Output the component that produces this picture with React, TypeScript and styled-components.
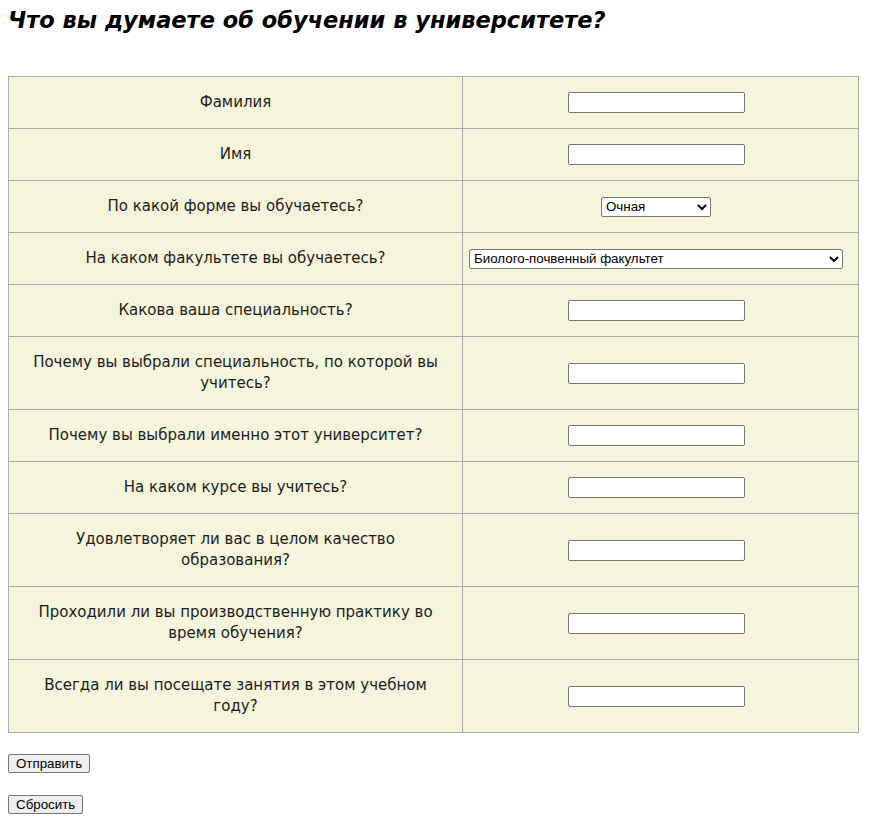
import * as React from 'react'
import styled, { createGlobalStyle } from 'styled-components'

const GlobalStyle = createGlobalStyle`
  body {
    margin: 8px;
    background: #ffffff;
    color: #1c1c1c;
    font-family: "DejaVu Sans", "Liberation Sans", sans-serif;
  }
`

type Question = {
  label: string
  field: 'text' | 'form' | 'faculty'
}

const questions: Question[] = [
  { label: 'Фамилия', field: 'text' },
  { label: 'Имя', field: 'text' },
  { label: 'По какой форме вы обучаетесь?', field: 'form' },
  { label: 'На каком факультете вы обучаетесь?', field: 'faculty' },
  { label: 'Какова ваша специальность?', field: 'text' },
  { label: 'Почему вы выбрали специальность, по которой вы учитесь?', field: 'text' },
  { label: 'Почему вы выбрали именно этот университет?', field: 'text' },
  { label: 'На каком курсе вы учитесь?', field: 'text' },
  { label: 'Удовлетворяет ли вас в целом качество образования?', field: 'text' },
  { label: 'Проходили ли вы производственную практику во время обучения?', field: 'text' },
  { label: 'Всегда ли вы посещате занятия в этом учебном году?', field: 'text' },
]

const App: React.FC<{}> = () => {
  return (
    <>
      <GlobalStyle />
      <Title>Что вы думаете об обучении в университете?</Title>
      <Survey>
        <colgroup>
          <Col width="454px" />
          <Col width="396px" />
        </colgroup>
        <tbody>
          {questions.map((q) => (
            <tr key={q.label}>
              <LabelCell>{q.label}</LabelCell>
              <FieldCell>
                {q.field === 'text' && <TextInput type="text" />}
                {q.field === 'form' && (
                  <Select width="110px" defaultValue="Очная">
                    <option>Очная</option>
                    <option>Заочная</option>
                    <option>Очно-заочная</option>
                  </Select>
                )}
                {q.field === 'faculty' && (
                  <Select width="374px" defaultValue="Биолого-почвенный факультет">
                    <option>Биолого-почвенный факультет</option>
                    <option>Физический факультет</option>
                    <option>Химический факультет</option>
                  </Select>
                )}
              </FieldCell>
            </tr>
          ))}
        </tbody>
      </Survey>
      <Buttons>
        <Button type="submit">Отправить</Button>
        <Button type="reset">Сбросить</Button>
      </Buttons>
    </>
  )
}

const Title = styled.h2`
  margin: -4px 0 40px;
  font-size: 22.5px;
  line-height: 32px;
  font-style: italic;
  font-weight: bold;
  color: #000;
`

const Survey = styled.table`
  width: 851px;
  border-collapse: collapse;
  background: #f5f5dc;
  table-layout: fixed;
`

const Col = styled.col<{ width: string }>`
  width: ${props => props.width};
`

const LabelCell = styled.td`
  border: 1px solid #a9a9a9;
  padding: 15px 20px;
  text-align: center;
  font-size: 15px;
  line-height: 21px;
`

const FieldCell = styled.td`
  border: 1px solid #a9a9a9;
  padding: 0 9px 0 0;
  text-align: center;
  vertical-align: middle;
  line-height: 0;
`

const TextInput = styled.input`
  box-sizing: border-box;
  width: 177px;
  height: 21px;
  vertical-align: middle;
  border: 1px solid #767676;
  border-radius: 2px;
  background: #fff;
  font-family: "Liberation Sans", Arial, sans-serif;
  font-size: 13.33px;
`

const Select = styled.select<{ width: string }>`
  box-sizing: border-box;
  width: ${props => props.width};
  height: 20px;
  vertical-align: middle;
  border: 1px solid #767676;
  border-radius: 2px;
  background: #fff;
  color: #000;
  font-family: "Liberation Sans", Arial, sans-serif;
  font-size: 13.33px;
`

const Buttons = styled.div`
  display: flex;
  flex-direction: column;
  align-items: flex-start;
  gap: 22px;
  margin-top: 21px;
`

const Button = styled.button`
  height: 19px;
  padding: 0 7px;
  border: 1px solid #767676;
  border-radius: 2px;
  background: #efefef;
  color: #000;
  font-family: "Liberation Sans", Arial, sans-serif;
  font-size: 13.33px;
  line-height: 15px;
`

export default App
